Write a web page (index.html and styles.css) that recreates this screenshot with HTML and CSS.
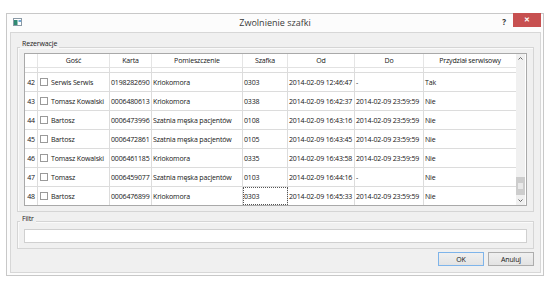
FILE: index.html
```html
<!DOCTYPE html>
<html lang="pl">
<head>
    <meta charset="UTF-8">
    <title>Zwolnienie szafki</title>
    <link rel="stylesheet" href="styles.css">
</head>
<body>
    <div class="window">
        <div class="titlebar">
            <div class="title-left">
                <svg class="app-icon" width="9" height="8" viewBox="0 0 9 8">
                    <rect x="0.5" y="0.5" width="8" height="7" fill="#fff" stroke="#8a9aa6"/>
                    <rect x="1" y="2" width="3.5" height="5" fill="#2f8a72"/>
                    <rect x="5.5" y="2" width="2.5" height="2" fill="#6fa6d6"/>
                </svg>
            </div>
            <div class="title">Zwolnienie szafki</div>
            <div class="title-right">
                <span class="help">?</span>
                <span class="close">&#x2715;</span>
            </div>
        </div>

        <div class="client">
            <!-- Rezerwacje -->
            <div class="group-title">Rezerwacje</div>
            <div class="group-box reservations">
                <div class="table">
                    <div class="grid">
                        <div class="row head">
                            <div class="cell rowhead"></div>
                            <div class="cell">Gość</div>
                            <div class="cell">Karta</div>
                            <div class="cell">Pomieszczenie</div>
                            <div class="cell">Szafka</div>
                            <div class="cell">Od</div>
                            <div class="cell">Do</div>
                            <div class="cell last">Przydział serwisowy</div>
                        </div>
                        <div class="body">
                            <div class="rows">
                                <div class="row">
                                    <div class="cell rowhead"></div>
                                    <div class="cell guest"><span class="check"></span></div>
                                    <div class="cell"></div>
                                    <div class="cell"></div>
                                    <div class="cell"></div>
                                    <div class="cell"></div>
                                    <div class="cell"></div>
                                    <div class="cell last"></div>
                                </div>
                                <div class="row">
                                    <div class="cell rowhead">42</div>
                                    <div class="cell guest"><span class="check"></span>Serwis Serwis</div>
                                    <div class="cell">0198282690</div>
                                    <div class="cell">Kriokomora</div>
                                    <div class="cell">0303</div>
                                    <div class="cell">2014-02-09 12:46:47</div>
                                    <div class="cell">-</div>
                                    <div class="cell last">Tak</div>
                                </div>
                                <div class="row">
                                    <div class="cell rowhead">43</div>
                                    <div class="cell guest"><span class="check"></span>Tomasz Kowalski</div>
                                    <div class="cell">0006480613</div>
                                    <div class="cell">Kriokomora</div>
                                    <div class="cell">0338</div>
                                    <div class="cell">2014-02-09 16:42:37</div>
                                    <div class="cell">2014-02-09 23:59:59</div>
                                    <div class="cell last">Nie</div>
                                </div>
                                <div class="row">
                                    <div class="cell rowhead">44</div>
                                    <div class="cell guest"><span class="check"></span>Bartosz</div>
                                    <div class="cell">0006473996</div>
                                    <div class="cell">Szatnia męska pacjentów</div>
                                    <div class="cell">0108</div>
                                    <div class="cell">2014-02-09 16:43:16</div>
                                    <div class="cell">2014-02-09 23:59:59</div>
                                    <div class="cell last">Nie</div>
                                </div>
                                <div class="row">
                                    <div class="cell rowhead">45</div>
                                    <div class="cell guest"><span class="check"></span>Bartosz</div>
                                    <div class="cell">0006472861</div>
                                    <div class="cell">Szatnia męska pacjentów</div>
                                    <div class="cell">0105</div>
                                    <div class="cell">2014-02-09 16:43:45</div>
                                    <div class="cell">2014-02-09 23:59:59</div>
                                    <div class="cell last">Nie</div>
                                </div>
                                <div class="row">
                                    <div class="cell rowhead">46</div>
                                    <div class="cell guest"><span class="check"></span>Tomasz Kowalski</div>
                                    <div class="cell">0006461185</div>
                                    <div class="cell">Kriokomora</div>
                                    <div class="cell">0335</div>
                                    <div class="cell">2014-02-09 16:43:58</div>
                                    <div class="cell">2014-02-09 23:59:59</div>
                                    <div class="cell last">Nie</div>
                                </div>
                                <div class="row">
                                    <div class="cell rowhead">47</div>
                                    <div class="cell guest"><span class="check"></span>Tomasz</div>
                                    <div class="cell">0006459077</div>
                                    <div class="cell">Szatnia męska pacjentów</div>
                                    <div class="cell">0103</div>
                                    <div class="cell">2014-02-09 16:44:16</div>
                                    <div class="cell">-</div>
                                    <div class="cell last">Nie</div>
                                </div>
                                <div class="row">
                                    <div class="cell rowhead">48</div>
                                    <div class="cell guest"><span class="check"></span>Bartosz</div>
                                    <div class="cell">0006476899</div>
                                    <div class="cell">Kriokomora</div>
                                    <div class="cell focus">0303</div>
                                    <div class="cell">2014-02-09 16:45:33</div>
                                    <div class="cell">2014-02-09 23:59:59</div>
                                    <div class="cell last">Nie</div>
                                </div>
                            </div>
                        </div>
                    </div>
                    <div class="vscroll">
                        <div class="arrow">
                            <svg width="5" height="3" viewBox="0 0 5 3"><path d="M0.5 2.5 L2.5 0.5 L4.5 2.5" fill="none" stroke="#555" stroke-width="0.9"/></svg>
                        </div>
                        <div class="track">
                            <div class="thumb"><span class="grip"></span></div>
                        </div>
                        <div class="arrow">
                            <svg width="5" height="3" viewBox="0 0 5 3"><path d="M0.5 0.5 L2.5 2.5 L4.5 0.5" fill="none" stroke="#555" stroke-width="0.9"/></svg>
                        </div>
                    </div>
                </div>
            </div>

            <!-- Filtr -->
            <div class="group-title second">Filtr</div>
            <div class="group-box filter">
                <input type="text" class="filter-input">
            </div>

            <div class="buttons">
                <button class="btn default">OK</button>
                <button class="btn">Anuluj</button>
            </div>
        </div>
    </div>
</body>
</html>
```

FILE: styles.css
```css
body {
    margin: 0;
    background: #fff;
    font-family: "Open Sans", "Noto Sans", sans-serif;
    font-size: 7px;
    letter-spacing: -0.15px;
    color: #151515;
}
.window {
    box-sizing: border-box;
    width: 538px;
    height: 263px;
    margin: 13px 0 0 6px;
    border: 1px solid #c8c8c8;
    background: #fcfcfc;
    display: flex;
    flex-direction: column;
}
.titlebar {
    height: 18px;
    display: grid;
    grid-template-columns: 1fr auto 1fr;
}
.title-left {
    padding: 4px 0 0 6px;
}
.app-icon {
    display: block;
}
.title {
    font-size: 9px;
    letter-spacing: 0;
    line-height: 18px;
    color: #3a3a3a;
}
.title-right {
    display: flex;
    justify-content: flex-end;
    align-items: flex-start;
}
.help {
    font-size: 8px;
    font-weight: bold;
    line-height: 10px;
    margin: 3px 7px 0 0;
    color: #333;
}
.close {
    width: 28px;
    height: 14px;
    margin: -1px 2px 0 0;
    background: #c75050;
    color: #fff;
    font-size: 7px;
    font-weight: bold;
    line-height: 14px;
    text-align: center;
}
.client {
    flex: 1;
    margin: 0 2px 2px 3px;
    border: 1px solid #d7d7d7;
    background: #f0f0f0;
    padding: 6px 6px 0 6px;
    display: flex;
    flex-direction: column;
}
.group-title {
    align-self: flex-start;
    position: relative;
    z-index: 1;
    margin-left: 3px;
    padding: 0 2px;
    line-height: 9px;
    background: #f0f0f0;
    color: #222;
}
.group-title.second {
    margin-top: 2px;
}
.group-box {
    margin-top: -1px;
    border: 1px solid #d5d5d5;
    box-shadow: inset 1px 1px 0 #fafafa;
    padding: 5px 6px;
}
.group-box.filter {
    margin-top: -2px;
    padding: 7px 6px 5px 6px;
}
.table {
    display: flex;
    height: 153px;
    box-sizing: border-box;
    border: 1px solid #a9a9a9;
    background: #fff;
}
.grid {
    width: 491px;
}
.row {
    display: grid;
    grid-template-columns: 13px 72px 42px 91px 45px 67px 69px 92px;
    height: 19px;
    box-sizing: border-box;
    border-bottom: 1px solid #dcdcdc;
}
.row.head {
    height: 14px;
    border-bottom-color: #e2e2e2;
}
.cell {
    border-right: 1px solid #dcdcdc;
    padding-left: 1px;
    white-space: nowrap;
    overflow: hidden;
    display: flex;
    align-items: center;
    color: #151515;
}
.cell.last {
    border-right: none;
}
.head .cell {
    justify-content: center;
    padding-left: 0;
    border-right-color: #e5e5e5;
}
.cell.rowhead {
    justify-content: center;
    padding-left: 0;
}
.cell.guest {
    padding-left: 2px;
}
.check {
    width: 8px;
    height: 8px;
    box-sizing: border-box;
    border: 1px solid #9a9a9a;
    background: #fff;
    margin-right: 3px;
    flex: none;
}
.cell.focus {
    outline: 1px dotted #555;
    outline-offset: -1px;
}
.body {
    height: 137px;
    overflow: hidden;
}
.rows {
    margin-top: -14px;
}
.vscroll {
    width: 9px;
    background: #f0f0f0;
    display: flex;
    flex-direction: column;
}
.arrow {
    height: 9px;
    display: flex;
    align-items: center;
    justify-content: center;
}
.arrow svg {
    display: block;
}
.track {
    flex: 1;
    display: flex;
    flex-direction: column;
    justify-content: flex-end;
}
.thumb {
    height: 18px;
    margin-bottom: 1px;
    background: #cdcdcd;
    display: flex;
    align-items: center;
    justify-content: center;
}
.grip {
    width: 5px;
    height: 6px;
    background: #e9e9e9;
}
.filter-input {
    display: block;
    box-sizing: border-box;
    width: 100%;
    height: 14px;
    margin: 0;
    border: 1px solid #d0d0d0;
    background: #fff;
}
.buttons {
    display: flex;
    justify-content: flex-end;
    gap: 4px;
    margin-top: 3px;
}
.btn {
    width: 46px;
    height: 14px;
    padding: 0;
    font-family: inherit;
    font-size: 7px;
    letter-spacing: inherit;
    color: #151515;
    border: 1px solid #adadad;
    background: linear-gradient(#f0f0f0, #e3e3e3);
}
.btn.default {
    border-color: #7eb4ea;
}
```
